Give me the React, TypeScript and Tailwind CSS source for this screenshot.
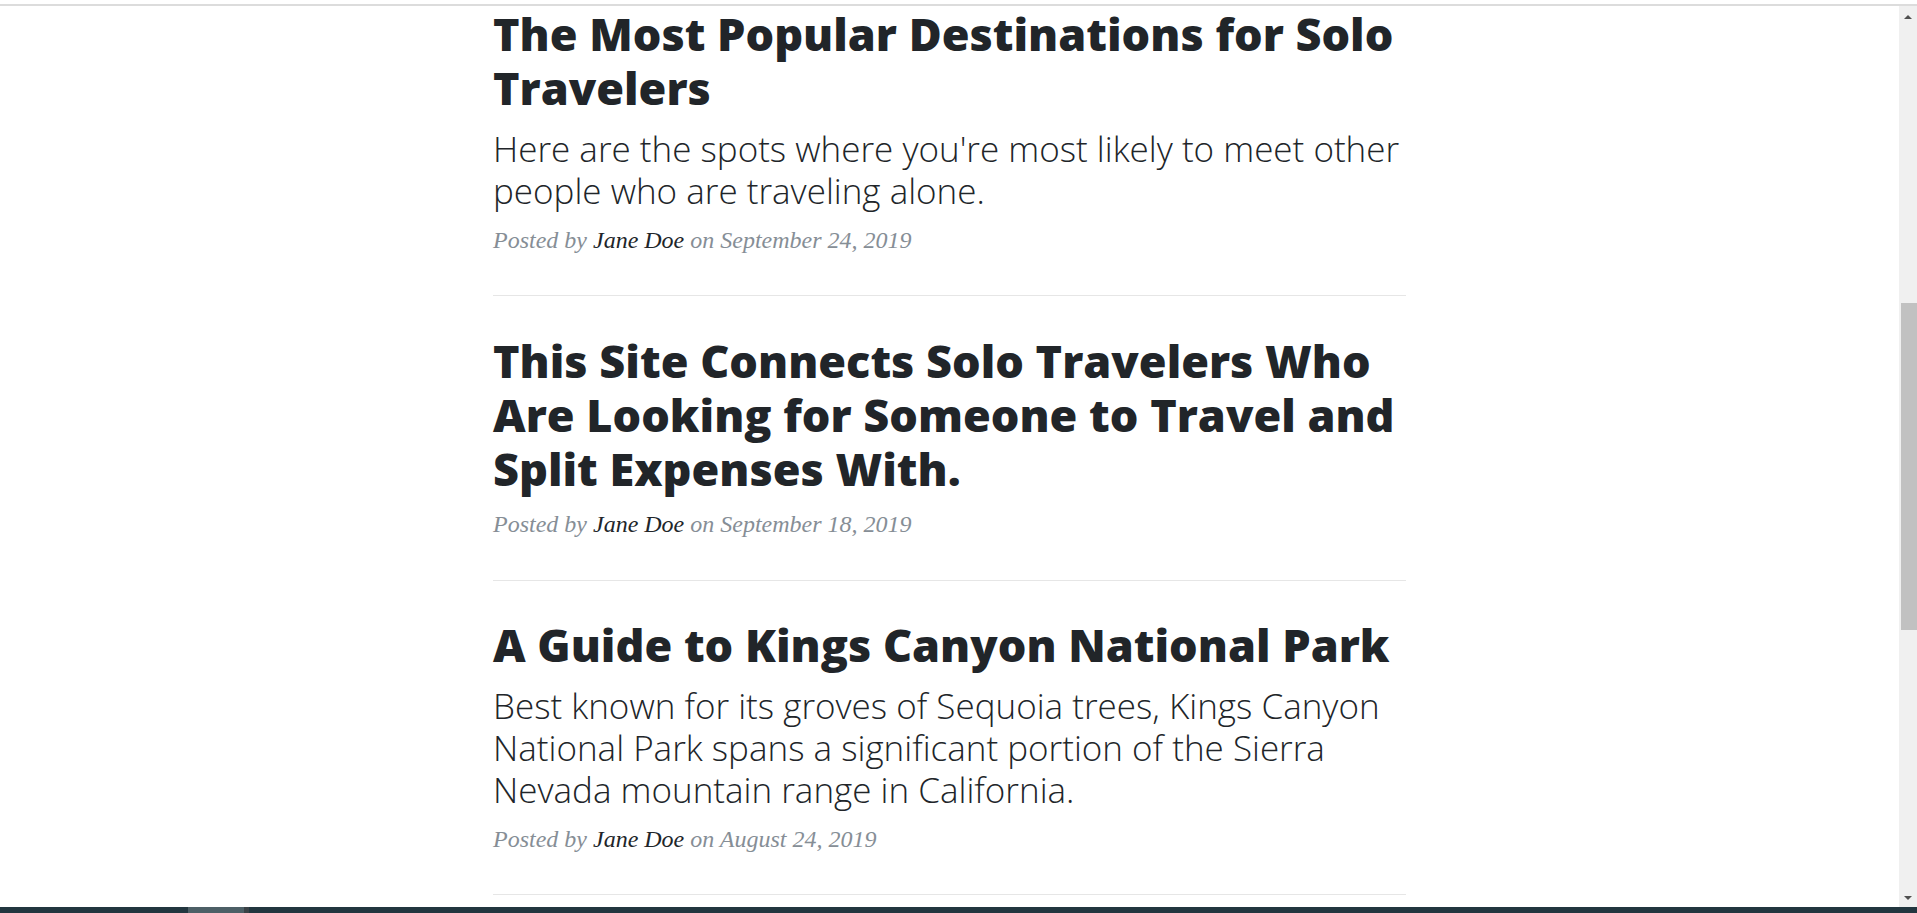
import React from "react";

type Post = {
  title: string;
  subtitle?: string;
  date: string;
};

const posts: Post[] = [
  {
    title: "The Most Popular Destinations for Solo Travelers",
    subtitle:
      "Here are the spots where you're most likely to meet other people who are traveling alone.",
    date: "September 24, 2019",
  },
  {
    title:
      "This Site Connects Solo Travelers Who Are Looking for Someone to Travel and Split Expenses With.",
    date: "September 18, 2019",
  },
  {
    title: "A Guide to Kings Canyon National Park",
    subtitle:
      "Best known for its groves of Sequoia trees, Kings Canyon National Park spans a significant portion of the Sierra Nevada mountain range in California.",
    date: "August 24, 2019",
  },
];

const PostPreview = ({ post, first }: { post: Post; first: boolean }) => {
  return (
    <div className={first ? "" : "mt-[37.5px]"}>
      <a href="#" className="block">
        <h2 className="font-['Open_Sans',sans-serif] text-[45px] leading-[54px] font-extrabold text-[#212529] mb-[12.5px]">
          {post.title}
        </h2>
        {post.subtitle && (
          <h3 className="font-['Open_Sans',sans-serif] text-[35px] leading-[42px] font-light text-[#212529] mb-[12.5px]">
            {post.subtitle}
          </h3>
        )}
      </a>
      <p className="font-['Liberation_Serif',serif] italic text-[24px] leading-[33.75px] text-[#868e96] mb-[37.5px]">
        Posted by{" "}
        <a href="#" className="text-[#212529]">
          Jane Doe
        </a>{" "}
        on {post.date}
      </p>
      <hr className="border-0 border-t border-[#e6e6e6]" />
    </div>
  );
};

const Scrollbar = () => {
  return (
    <div className="w-[18px] shrink-0 bg-[#f0f0f0] flex flex-col">
      <div className="h-[22px] flex justify-center pt-[9px]">
        <div className="w-0 h-0 border-l-[4px] border-r-[4px] border-b-[4px] border-l-transparent border-r-transparent border-b-[#505050]" />
      </div>
      <div className="h-[275px]" />
      <div className="h-[327px] ml-[2px] bg-[#c1c1c1]" />
      <div className="flex-1" />
      <div className="h-[16px] flex justify-center pt-[5px]">
        <div className="w-0 h-0 border-l-[4px] border-r-[4px] border-t-[4px] border-l-transparent border-r-transparent border-t-[#505050]" />
      </div>
    </div>
  );
};

export default function App() {
  return (
    <div className="h-[913px] w-full overflow-hidden flex flex-col bg-white">
      <div className="h-[4px] shrink-0" />
      <div className="h-[2px] shrink-0 bg-[#dcdcdc]" />
      <div className="flex flex-1 min-h-0">
        <main className="flex-1 overflow-hidden">
          <div className="w-[913px] mx-auto pt-[1px]">
            {posts.map((post, i) => (
              <PostPreview key={i} post={post} first={i === 0} />
            ))}
          </div>
        </main>
        <Scrollbar />
      </div>
      <div className="h-[6px] shrink-0 bg-[#22363f] flex">
        <div className="w-[188px]" />
        <div className="w-[56px] bg-[#4d5f66]" />
        <div className="w-[5px] bg-[#3a4246]" />
      </div>
    </div>
  );
}
